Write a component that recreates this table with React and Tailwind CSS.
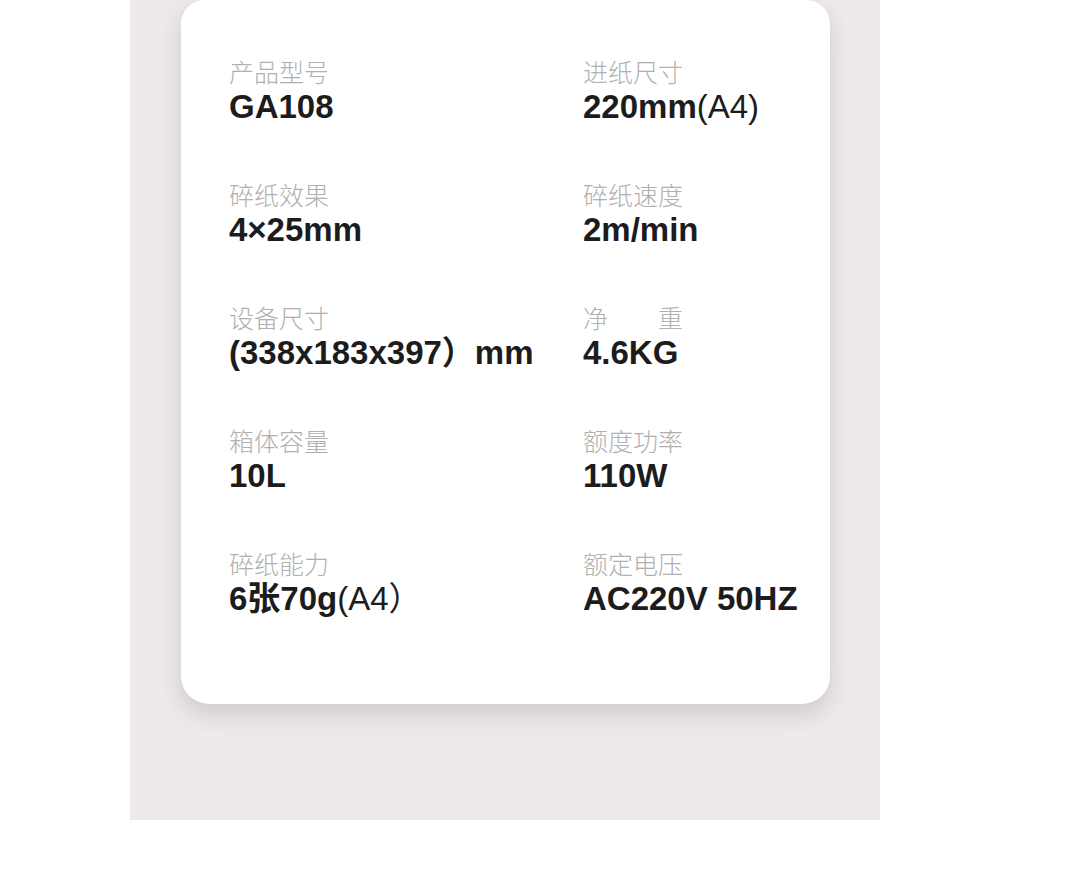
import React from "react";

const Light = ({ children }) => <span className="font-normal">{children}</span>;

const specs = [
  ["产品型号", "GA108", "进纸尺寸", <>220mm<Light>(A4)</Light></>],
  ["碎纸效果", "4×25mm", "碎纸速度", "2m/min"],
  ["设备尺寸", "(338x183x397）mm", "净\u3000\u3000重", "4.6KG"],
  ["箱体容量", "10L", "额度功率", "110W"],
  ["碎纸能力", <>6张70g<Light>(A4）</Light></>, "额定电压", "AC220V 50HZ"],
];

const Spec = ({ label, value }) => (
  <div className="flex flex-col">
    <div
      className="text-[25px] leading-[30px] font-light text-[#b0b0b0]"
      style={{ fontFamily: '"Noto Sans CJK SC", sans-serif' }}
    >
      {label}
    </div>
    <div
      className="mt-[2px] text-[33px] leading-[38px] font-bold text-[#1c1c1c] whitespace-nowrap"
      style={{ fontFamily: '"Liberation Sans", "Noto Sans CJK SC", sans-serif' }}
    >
      {value}
    </div>
  </div>
);

const App = () => {
  return (
    <div className="w-[1065px] h-[872px] bg-white">
      <div className="ml-[130px] w-[750px] h-[820px] bg-[#eeeaea]">
        <div className="ml-[51px] w-[649px] h-[704px] bg-white rounded-b-[28px] rounded-t-[24px] shadow-[0_10px_22px_rgba(90,70,70,0.2)] pl-[48px] pt-[56px]">
          <div className="grid grid-cols-[354px_1fr] gap-y-[53px]">
            {specs.map(([l1, v1, l2, v2]) => (
              <React.Fragment key={l1}>
                <Spec label={l1} value={v1} />
                <Spec label={l2} value={v2} />
              </React.Fragment>
            ))}
          </div>
        </div>
      </div>
    </div>
  );
};

export default App;
